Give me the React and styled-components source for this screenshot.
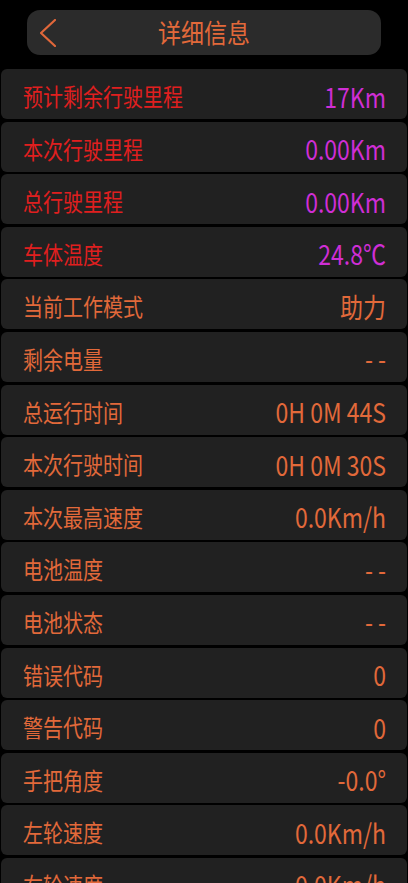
import React from "react";
import styled, { createGlobalStyle } from "styled-components";

const rows = [
  { label: "预计剩余行驶里程", value: "17Km", hot: true },
  { label: "本次行驶里程", value: "0.00Km", hot: true },
  { label: "总行驶里程", value: "0.00Km", hot: true },
  { label: "车体温度", value: "24.8℃", hot: true },
  { label: "当前工作模式", value: "助力" },
  { label: "剩余电量", value: "- -" },
  { label: "总运行时间", value: "0H 0M 44S" },
  { label: "本次行驶时间", value: "0H 0M 30S" },
  { label: "本次最高速度", value: "0.0Km/h" },
  { label: "电池温度", value: "- -" },
  { label: "电池状态", value: "- -" },
  { label: "错误代码", value: "0" },
  { label: "警告代码", value: "0" },
  { label: "手把角度", value: "-0.0°" },
  { label: "左轮速度", value: "0.0Km/h" },
  { label: "右轮速度", value: "0.0Km/h" },
];

const App = () => {
  return (
    <Page>
      <GlobalStyle />
      <HeaderWrap>
        <Header>
          <BackButton aria-label="back">
            <svg width="16" height="28" viewBox="0 0 16 28">
              <polyline
                points="15,1 1,14 15,27"
                fill="none"
                stroke="#e0673a"
                strokeWidth="2.2"
                strokeLinecap="round"
                strokeLinejoin="round"
              />
            </svg>
          </BackButton>
          <Title>详细信息</Title>
          <span />
        </Header>
      </HeaderWrap>
      <List>
        {rows.map((r) => (
          <Row key={r.label}>
            <Label $hot={r.hot}>{r.label}</Label>
            <Value $hot={r.hot}>{r.value}</Value>
          </Row>
        ))}
      </List>
    </Page>
  );
};

export default App;

const GlobalStyle = createGlobalStyle`
  html, body {
    margin: 0;
    padding: 0;
    background: #000;
    overflow: hidden;
  }
  body {
    font-family: "Noto Sans CJK SC", "Noto Sans", sans-serif;
  }
`;

const Page = styled.main`
  width: 408px;
  height: 883px;
  background: #000;
  overflow: hidden;
`;

const HeaderWrap = styled.div`
  padding: 10px 27px 0 27px;
`;

const Header = styled.div`
  height: 45px;
  background: #2b2b2b;
  border-radius: 13px;
  display: grid;
  grid-template-columns: 1fr auto 1fr;
  align-items: center;
  padding: 0 13px;
`;

const BackButton = styled.div`
  display: flex;
  align-items: center;
  svg {
    display: block;
  }
`;

const Title = styled.div`
  color: #e2693a;
  font-size: 23px;
  line-height: 1;
  transform: scaleY(1.15);
`;

const List = styled.div`
  margin-top: 14px;
  display: flex;
  flex-direction: column;
  gap: 2.6px;
  padding: 0 1px;
`;

const Row = styled.div`
  height: 50px;
  flex-shrink: 0;
  background: #212121;
  border-radius: 6px;
  display: flex;
  align-items: center;
  justify-content: space-between;
  padding: 0 21px 0 22px;
`;

const Label = styled.span`
  color: ${(p) => (p.$hot ? "#e01f1f" : "#e2693a")};
  font-size: 20px;
  line-height: 1;
  transform: scaleY(1.18);
  padding-top: 4px;
`;

const Value = styled.span`
  color: ${(p) => (p.$hot ? "#cf2ed5" : "#e2693a")};
  font-size: 23px;
  line-height: 1;
  transform: scaleY(1.2);
  padding-top: 4px;
  white-space: pre;
`;
